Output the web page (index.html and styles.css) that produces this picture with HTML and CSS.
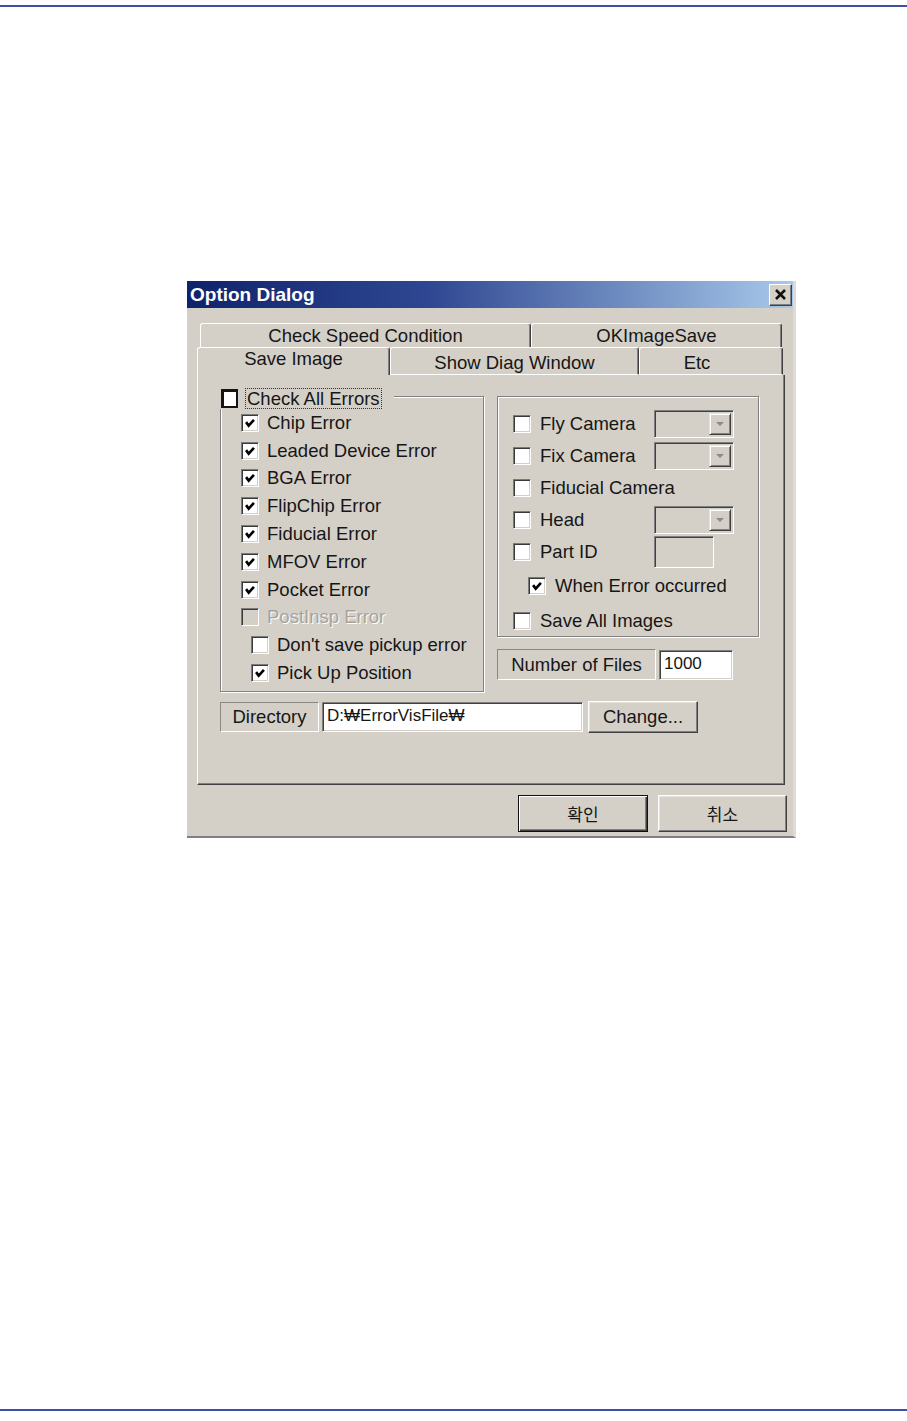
FILE: index.html
```html
<!DOCTYPE html>
<html lang="ko">
<head>
    <meta charset="UTF-8">
    <meta name="viewport" content="width=device-width, initial-scale=1.0">
    <title>Option Dialog</title>
    <link rel="stylesheet" href="styles.css">
</head>
<body>
    <div class="rule rule-top"></div>

    <div class="dialog">
        <div class="titlebar">
            <span class="title">Option Dialog</span>
            <span class="close-btn">
                <svg width="21" height="20" viewBox="0 0 21 20"><path d="M6 5 L15 14 M15 5 L6 14" stroke="#111" stroke-width="2.6" fill="none"/></svg>
            </span>
        </div>

        <div class="tab-row tab-row-back">
            <div class="tab tab-speed">Check Speed Condition</div>
            <div class="tab tab-ok">OKImageSave</div>
        </div>
        <div class="tab-row tab-row-front">
            <div class="tab tab-save active">Save Image</div>
            <div class="tab tab-diag">Show Diag Window</div>
            <div class="tab tab-etc">Etc</div>
        </div>

        <div class="panel">
            <div class="panel-top">
                <!-- error types -->
                <div class="group group-errors">
                    <div class="group-title">
                        <span class="chk-all"></span>
                        <span class="focus-label">Check All Errors</span>
                    </div>
                    <div class="row"><span class="chk on"><svg viewBox="0 0 16 16"><path d="M3.5 7 L6.5 11 L12.5 4.5"/></svg></span>Chip Error</div>
                    <div class="row"><span class="chk on"><svg viewBox="0 0 16 16"><path d="M3.5 7 L6.5 11 L12.5 4.5"/></svg></span>Leaded Device Error</div>
                    <div class="row"><span class="chk on"><svg viewBox="0 0 16 16"><path d="M3.5 7 L6.5 11 L12.5 4.5"/></svg></span>BGA Error</div>
                    <div class="row"><span class="chk on"><svg viewBox="0 0 16 16"><path d="M3.5 7 L6.5 11 L12.5 4.5"/></svg></span>FlipChip Error</div>
                    <div class="row"><span class="chk on"><svg viewBox="0 0 16 16"><path d="M3.5 7 L6.5 11 L12.5 4.5"/></svg></span>Fiducial Error</div>
                    <div class="row"><span class="chk on"><svg viewBox="0 0 16 16"><path d="M3.5 7 L6.5 11 L12.5 4.5"/></svg></span>MFOV Error</div>
                    <div class="row"><span class="chk on"><svg viewBox="0 0 16 16"><path d="M3.5 7 L6.5 11 L12.5 4.5"/></svg></span>Pocket Error</div>
                    <div class="row disabled"><span class="chk"></span>PostInsp Error</div>
                    <div class="row sub"><span class="chk"></span>Don't save pickup error</div>
                    <div class="row sub"><span class="chk on"><svg viewBox="0 0 16 16"><path d="M3.5 7 L6.5 11 L12.5 4.5"/></svg></span>Pick Up Position</div>
                </div>

                <div class="side">
                    <!-- cameras -->
                    <div class="group group-camera">
                        <div class="crow">
                            <span class="clabel"><span class="chk"></span>Fly Camera</span>
                            <span class="combo"><span class="combo-btn"><svg width="10" height="6" viewBox="0 0 10 6"><path d="M1 1 H9 L5 5 Z" fill="#8c8a86"/></svg></span></span>
                        </div>
                        <div class="crow">
                            <span class="clabel"><span class="chk"></span>Fix Camera</span>
                            <span class="combo"><span class="combo-btn"><svg width="10" height="6" viewBox="0 0 10 6"><path d="M1 1 H9 L5 5 Z" fill="#8c8a86"/></svg></span></span>
                        </div>
                        <div class="crow">
                            <span class="clabel wide"><span class="chk"></span>Fiducial Camera</span>
                        </div>
                        <div class="crow">
                            <span class="clabel"><span class="chk"></span>Head</span>
                            <span class="combo"><span class="combo-btn"><svg width="10" height="6" viewBox="0 0 10 6"><path d="M1 1 H9 L5 5 Z" fill="#8c8a86"/></svg></span></span>
                        </div>
                        <div class="crow">
                            <span class="clabel"><span class="chk"></span>Part ID</span>
                            <span class="edit edit-off edit-part"></span>
                        </div>
                        <div class="crow crow-sub">
                            <span class="clabel wide"><span class="chk on"><svg viewBox="0 0 16 16"><path d="M3.5 7 L6.5 11 L12.5 4.5"/></svg></span>When Error occurred</span>
                        </div>
                        <div class="crow crow-last">
                            <span class="clabel wide"><span class="chk"></span>Save All Images</span>
                        </div>
                    </div>

                    <div class="field-row files-row">
                        <span class="static static-files">Number of Files</span>
                        <span class="edit edit-files">1000</span>
                    </div>
                </div>
            </div>

            <div class="field-row dir-row">
                <span class="static static-dir">Directory</span>
                <span class="edit edit-dir">D:₩ErrorVisFile₩</span>
                <span class="btn btn-change">Change...</span>
            </div>
        </div>

        <div class="footer">
            <span class="btn btn-default">확인</span>
            <span class="btn btn-cancel">취소</span>
        </div>
    </div>

    <div class="rule rule-bottom"></div>
</body>
</html>
```

FILE: styles.css
```css
* {
    box-sizing: border-box;
}
body {
    margin: 0;
    background-color: #fff;
    font-family: "Liberation Sans", Arial, sans-serif;
    font-size: 18.5px;
    color: #161616;
}
.rule {
    height: 2px;
    background-color: #3e4fa6;
}
.rule-top {
    margin-top: 5px;
}
.rule-bottom {
    margin-top: 571px;
}

/* dialog frame */
.dialog {
    display: flex;
    flex-direction: column;
    width: 609px;
    height: 557px;
    margin: 274px 0 0 187px;
    background-color: #d4d0c8;
    border-bottom: 2px solid #808080;
    border-right: 3px solid #dedad4;
}
.titlebar {
    display: flex;
    align-items: center;
    justify-content: space-between;
    height: 27px;
    padding: 0 1px 0 3px;
    background: linear-gradient(to right, #0e236b, #2f4792 40%, #a8c9ea);
}
.title {
    color: #fff;
    font-weight: bold;
    font-size: 19px;
}
.close-btn {
    display: flex;
    align-items: center;
    justify-content: center;
    width: 23px;
    height: 22px;
    background-color: #d4d0c8;
    border: 1px solid;
    border-color: #fff #404040 #404040 #fff;
    box-shadow: inset -1px -1px #808080;
}

/* tabs */
.tab-row {
    display: flex;
}
.tab-row-back {
    height: 24px;
    margin: 15px 0 0 13px;
}
.tab-row-front {
    height: 28px;
    margin-left: 10px;
}
.tab {
    display: flex;
    align-items: center;
    justify-content: center;
    height: 100%;
    border-top: 1px solid #fff;
    border-left: 1px solid #fff;
    border-right: 1px solid #404040;
    box-shadow: inset -1px 0 #808080;
    border-radius: 3px 3px 0 0;
    background-color: #d4d0c8;
}
.tab-row-front .tab {
    border-bottom: 1px solid #fff;
    padding-top: 3px;
}
.tab-row-front .tab.active {
    border-bottom: none;
    padding: 0 0 6px;
}
.tab-speed { width: 331px; }
.tab-ok { width: 251px; }
.tab-save { width: 193px; }
.tab-diag { width: 249px; }
.tab-etc {
    width: 144px;
    padding-right: 28px;
}

/* panel */
.panel {
    width: 588px;
    height: 410px;
    margin-left: 10px;
    padding: 21px 0 0 22px;
    border-left: 1px solid #fff;
    border-right: 1px solid #404040;
    border-bottom: 1px solid #404040;
    box-shadow: inset -1px -1px #808080;
}
.panel-top {
    display: flex;
    align-items: flex-start;
}
.group {
    border: 1px solid #808080;
    box-shadow: inset 1px 1px #fff, 1px 1px #fff;
}
.group-errors {
    width: 264px;
    height: 296px;
}
.group-title {
    display: flex;
    align-items: center;
    width: fit-content;
    height: 22px;
    margin: -10px 0 0 -1px;
    padding: 0 12px 0 1px;
    background-color: #d4d0c8;
}
.chk-all {
    width: 17px;
    height: 19px;
    border: 3px solid #141414;
    border-right-width: 2px;
    border-bottom-width: 2px;
    background-color: #fff;
}
.focus-label {
    height: 21px;
    margin-left: 7px;
    padding: 0 1px;
    line-height: 19px;
    border: 1px dotted #333;
}

.row {
    display: flex;
    align-items: center;
    height: 27.8px;
    padding-left: 20px;
    white-space: nowrap;
}
.row.sub {
    padding-left: 30px;
}
.row .chk {
    margin-right: 8px;
}
.row.disabled {
    color: #a6a39e;
    text-shadow: 1px 1px #fff;
}
.row.disabled .chk {
    background-color: #d4d0c8;
}

/* classic checkbox */
.chk {
    display: inline-flex;
    flex-shrink: 0;
    width: 18px;
    height: 18px;
    padding: 1px;
    border: 1px solid;
    border-color: #7a7a7a #fff #fff #7a7a7a;
    box-shadow: inset 1px 1px #3a3a3a, inset -1px -1px #d4d0c8;
    background-color: #fff;
}
.chk svg {
    width: 100%;
    height: 100%;
}
.chk svg path {
    fill: none;
    stroke: #000;
    stroke-width: 3;
}

.side {
    margin-left: 13px;
}
.group-camera {
    width: 262px;
    height: 241px;
    padding-top: 11px;
}
.crow {
    display: grid;
    grid-template-columns: 141px auto;
    align-items: center;
    height: 32px;
    padding-left: 15px;
}
.crow-sub {
    margin-top: 2px;
    padding-left: 30px;
}
.crow-last {
    margin-top: 3px;
}
.clabel {
    display: flex;
    align-items: center;
    white-space: nowrap;
}
.clabel.wide {
    grid-column: 1 / -1;
}
.clabel .chk {
    margin-right: 9px;
}

/* combo / edit / static */
.combo {
    display: flex;
    justify-content: flex-end;
    width: 80px;
    height: 28px;
    padding: 2px;
    border: 1px solid;
    border-color: #808080 #fff #fff #808080;
    box-shadow: inset 1px 1px #404040, inset -1px -1px #d4d0c8;
}
.combo-btn {
    display: flex;
    align-items: center;
    justify-content: center;
    width: 22px;
    height: 100%;
    border: 1px solid;
    border-color: #e6e3de #404040 #404040 #e6e3de;
    box-shadow: inset 1px 1px #fff, inset -1px -1px #808080;
}
.edit {
    display: flex;
    align-items: center;
    height: 30px;
    padding: 0 4px 2px;
    font-size: 17px;
    background-color: #fff;
    border: 1px solid;
    border-color: #808080 #fff #fff #808080;
    box-shadow: inset 1px 1px #404040, inset -1px -1px #d4d0c8;
}
.edit-off {
    background-color: #d4d0c8;
}
.edit-part {
    width: 60px;
    height: 32px;
}
.static {
    display: flex;
    align-items: center;
    justify-content: center;
    height: 31px;
    border: 1px solid;
    border-color: #8a8883 #fff #fff #8a8883;
}
.field-row {
    display: flex;
    align-items: center;
}
.files-row {
    height: 31px;
    margin-top: 12px;
}
.static-files {
    width: 159px;
}
.edit-files {
    width: 74px;
    margin-left: 3px;
}
.dir-row {
    height: 32px;
    margin-top: 9px;
}
.static-dir {
    width: 99px;
    height: 30px;
}
.edit-dir {
    width: 261px;
    margin-left: 3px;
}

/* buttons */
.btn {
    display: flex;
    align-items: center;
    justify-content: center;
    background-color: #d4d0c8;
    border: 1px solid;
    border-color: #fff #404040 #404040 #fff;
    box-shadow: inset -1px -1px #808080, inset 1px 1px #e6e3de;
}
.btn-change {
    width: 110px;
    height: 32px;
    margin-left: 5px;
}
.footer {
    display: flex;
    justify-content: flex-end;
    gap: 10px;
    margin-top: 10px;
    padding-right: 6px;
    font-family: "Noto Sans CJK KR", sans-serif;
    font-size: 17px;
}
.footer .btn {
    width: 129px;
    height: 37px;
}
.footer .btn-default {
    width: 130px;
    border: 1px solid #111;
    box-shadow: inset 1px 1px #fff, inset -1px -1px #404040, inset -2px -2px #808080;
}
```
